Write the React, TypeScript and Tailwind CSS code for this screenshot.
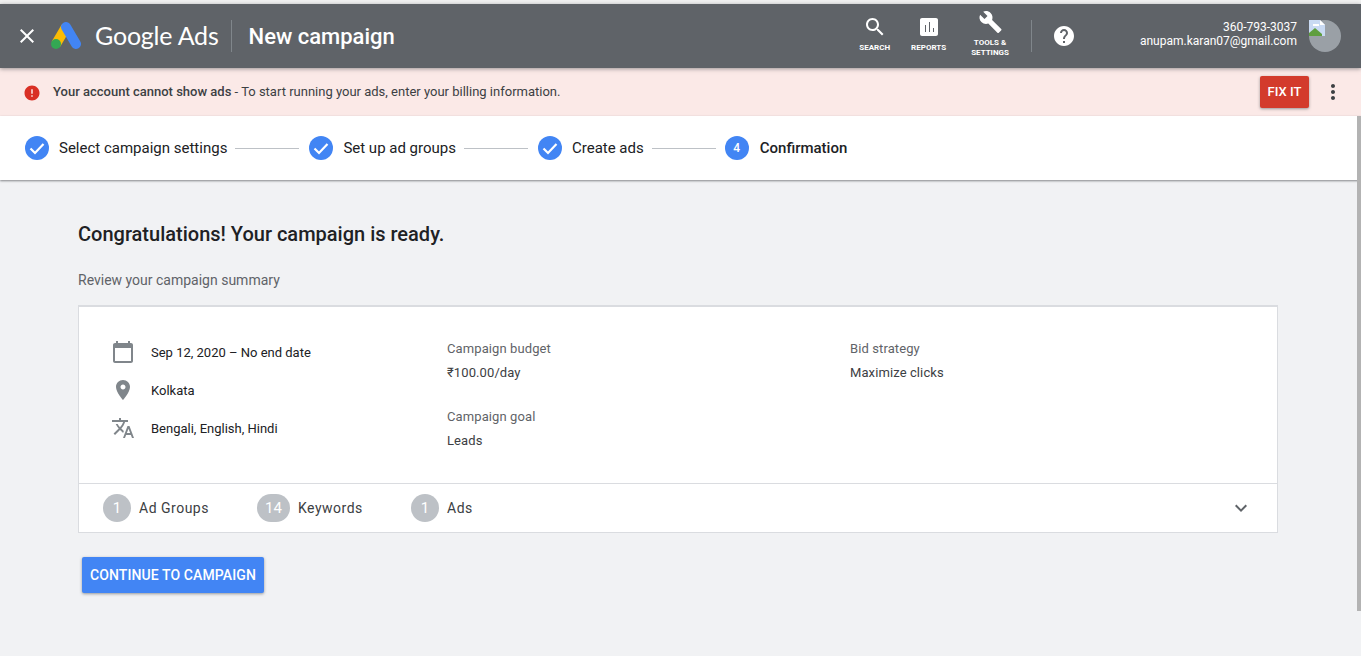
function Check({ className = '' }: { className?: string }) {
  return (
    <svg viewBox="0 0 24 24" className={`w-6 h-6 shrink-0 ${className}`}>
      <circle cx="12" cy="12" r="12" fill="#4285f4" />
      <path d="M5.5 12.5l4.5 4.5 8.5-9" fill="none" stroke="#fff" strokeWidth="2.2" />
    </svg>
  );
}

function Logo() {
  return (
    <svg viewBox="0 0 30 28" className="w-[30px] h-[28px]">
      <path d="M15 5L5 22" stroke="#fbbc04" strokeWidth="10" fill="none" />
      <path d="M15 5l10 17" stroke="#4285f4" strokeWidth="10" strokeLinecap="round" fill="none" />
      <circle cx="5" cy="22" r="5" fill="#34a853" />
    </svg>
  );
}

function NavIcon({ d, label, size = 'w-6 h-6' }: { d: string; label: React.ReactNode; size?: string }) {
  return (
    <div className="flex flex-col items-center mb-1 text-white font-bold text-[8px] leading-[10px] uppercase text-center">
      <svg viewBox="0 0 24 24" className={size} fill="#fff"><path d={d} /></svg>
      <span className="mt-1">{label}</span>
    </div>
  );
}

function Step({ label, line = true }: { label: string; line?: boolean }) {
  return (
    <>
      <Check />
      <span className="ml-[10px] text-[15px] text-[#202124] whitespace-nowrap">{label}</span>
      {line && <div className="h-px w-16 bg-[#bdc1c6] ml-2 mr-[10px]" />}
    </>
  );
}

function Count({ n, label, wide = false }: { n: number; label: string; wide?: boolean }) {
  return (
    <div className="flex items-center">
      <span className={`h-7 rounded-full bg-[#bdc1c6] text-white text-[15px] flex items-center justify-center ${wide ? 'w-[33px]' : 'w-7'}`}>{n}</span>
      <span className="ml-2 text-[14px] tracking-[0.5px] text-[#3c4043]">{label}</span>
    </div>
  );
}

export default function App() {
  return (
    <div className="h-[656px] overflow-hidden flex flex-col bg-[#f1f2f4] relative" style={{ fontFamily: 'Roboto, "Noto Sans", sans-serif' }}>
      <div className="h-1 bg-[#f1f1f1] shrink-0" />
      <header className="h-16 shrink-0 bg-[#5f6368] flex items-center shadow-[0_1px_4px_rgba(60,64,67,.5)] relative z-20">
        <svg viewBox="0 0 24 24" className="w-6 h-6 ml-[15px]" fill="#fff">
          <path d="M19 6.41L17.59 5 12 10.59 6.41 5 5 6.41 10.59 12 5 17.59 6.41 19 12 13.41 17.59 19 19 17.59 13.41 12z" />
        </svg>
        <div className="ml-[12px] flex"><Logo /></div>
        <span className="ml-[14px] text-[25px] tracking-[-0.2px] text-white" style={{ fontFamily: 'Lato, sans-serif' }}>Google Ads</span>
        <div className="w-px h-8 bg-[#80868b] ml-[12px]" />
        <span className="ml-[17px] text-[22px] font-medium text-white">New campaign</span>

        <div className="ml-auto flex items-center">
          <div className="mr-[21px]">
            <NavIcon label="Search" d="M15.5 14h-.79l-.28-.27C15.41 12.59 16 11.11 16 9.5 16 5.91 13.09 3 9.5 3S3 5.91 3 9.5 5.91 16 9.5 16c1.61 0 3.09-.59 4.23-1.57l.27.28v.79l5 4.99L20.49 19l-4.99-5zm-6 0C7.01 14 5 11.99 5 9.5S7.01 5 9.5 5 14 7.01 14 9.5 11.99 14 9.5 14z" />
          </div>
          <div className="mr-[25px]">
            <NavIcon label="Reports" d="M19 3H5c-1.1 0-2 .9-2 2v14c0 1.1.9 2 2 2h14c1.1 0 2-.9 2-2V5c0-1.1-.9-2-2-2zM9 17H8v-7h1v7zm4 0h-1V7h1v10zm4 0h-1v-4h1v4z" />
          </div>
          <div className="mr-[22px]">
            <NavIcon size="w-[25px] h-6" label={<>Tools &<br />Settings</>} d="M22.7 19l-9.1-9.1c.9-2.3.4-5-1.5-6.9-2-2-5-2.4-7.4-1.3L9 6 6 9 1.6 4.7C.4 7.1.9 10.1 2.9 12.1c1.9 1.9 4.6 2.4 6.9 1.5l9.1 9.1c.4.4 1 .4 1.4 0l2.3-2.3c.5-.4.5-1.1.1-1.4z" />
          </div>
          <div className="w-px h-8 bg-[#80868b]" />
          <svg viewBox="0 0 24 24" className="w-6 h-6 ml-5" fill="#fff">
            <path d="M12 2C6.48 2 2 6.48 2 12s4.48 10 10 10 10-4.48 10-10S17.52 2 12 2zm1 17h-2v-2h2v2zm2.07-7.75l-.9.92C13.45 12.9 13 13.5 13 15h-2v-.5c0-1.1.45-2.1 1.17-2.83l1.24-1.26c.37-.36.59-.86.59-1.41 0-1.1-.9-2-2-2s-2 .9-2 2H8c0-2.21 1.79-4 4-4s4 1.79 4 4c0 .88-.36 1.68-.93 2.25z" />
          </svg>
          <div className="ml-16 mb-1 text-right text-white text-[12px] leading-[14px]">
            <div>360-793-3037</div>
            <div>anupam.karan07@gmail.com</div>
          </div>
          <div className="relative w-8 h-8 rounded-full bg-[#9aa0a6] ml-3 mr-5">
            <svg viewBox="0 0 16 16" className="absolute left-0 top-0 w-4 h-4">
              <path d="M0 0h11l5 5v11H0z" fill="#c9daf3" />
              <path d="M11 0l5 5h-5z" fill="#fff" />
              <path d="M4 4h6v2H4z" fill="#fff" />
              <path d="M0 13l6-5 7 6v2H0z" fill="#5f9e3f" />
            </svg>
          </div>
        </div>
      </header>

      <div className="h-12 shrink-0 bg-[#fbe9e7] flex items-center relative">
        <svg viewBox="0 0 24 24" className="w-[18px] h-[18px] ml-[23px] mt-[2px]" fill="#d93025">
          <path d="M12 2C6.48 2 2 6.48 2 12s4.48 10 10 10 10-4.48 10-10S17.52 2 12 2zm1 15h-2v-2h2v2zm0-4h-2V7h2v6z" />
        </svg>
        <span className="ml-[12px] text-[13px] text-[#3c4043]">
          <span className="font-medium">Your account cannot show ads</span> - To start running your ads, enter your billing information.
        </span>
        <button className="ml-auto h-8 w-[49px] rounded-[2px] bg-[#d33b2c] text-white text-[13px] font-medium shadow-[0_1px_3px_rgba(60,64,67,.5)]">FIX IT</button>
        <svg viewBox="0 0 24 24" className="w-6 h-6 ml-3 mr-4" fill="#3c4043">
          <path d="M12 8c1.1 0 2-.9 2-2s-.9-2-2-2-2 .9-2 2 .9 2 2 2zm0 2c-1.1 0-2 .9-2 2s.9 2 2 2 2-.9 2-2-.9-2-2-2zm0 6c-1.1 0-2 .9-2 2s.9 2 2 2 2-.9 2-2-.9-2-2-2z" />
        </svg>
      </div>

      <div className="h-16 shrink-0 bg-white flex items-center pl-[25px] shadow-[0_1px_2px_rgba(60,64,67,.6)] relative z-10">
        <Step label="Select campaign settings" />
        <Step label="Set up ad groups" />
        <Step label="Create ads" />
        <span className="-ml-px w-6 h-6 rounded-full bg-[#4285f4] text-white text-[12px] font-medium flex items-center justify-center">4</span>
        <span className="ml-[11px] text-[15px] font-medium text-[#202124]">Confirmation</span>
      </div>

      <main className="flex-1 pl-[78px] pr-[83px]">
        <h1 className="mt-[41px] text-[20px] leading-[26px] font-medium text-[#202124]">Congratulations! Your campaign is ready.</h1>
        <p className="mt-[23px] text-[14px] leading-5 text-[#5f6368]">Review your campaign summary</p>
        <section className="mt-[15px] bg-white border border-[#dadce0] border-t-2">
          <div className="h-[176px] flex">
            <div className="w-[368px] pl-[32px] pt-[27px] shrink-0">
              {[
                ['Sep 12, 2020 – No end date', 'M20 3h-1V1h-2v2H7V1H5v2H4c-1.1 0-2 .9-2 2v16c0 1.1.9 2 2 2h16c1.1 0 2-.9 2-2V5c0-1.1-.9-2-2-2zm0 18H4V8h16v13z'],
                ['Kolkata', 'M12 2C8.13 2 5 5.13 5 9c0 5.25 7 13 7 13s7-7.75 7-13c0-3.87-3.13-7-7-7zm0 9.5c-1.38 0-2.5-1.12-2.5-2.5s1.12-2.5 2.5-2.5 2.5 1.12 2.5 2.5-1.12 2.5-2.5 2.5z'],
                ['Bengali, English, Hindi', 'M12.87 15.07l-2.54-2.51.03-.03c1.74-1.94 2.98-4.17 3.71-6.53H17V4h-7V2H8v2H1v1.99h11.17C11.5 7.92 10.44 9.75 9 11.35 8.07 10.32 7.3 9.19 6.69 8h-2c.73 1.63 1.73 3.17 2.98 4.56l-5.09 5.02L4 19l5-5 3.11 3.11.76-2.04zM18.5 10h-2L12 22h2l1.12-3h4.75L21 22h2l-4.5-12zm-2.62 7l1.62-4.33L19.12 17h-3.24z'],
              ].map(([t, d]) => (
                <div key={t} className="h-[38px] flex items-center">
                  <svg viewBox="0 0 24 24" className="w-6 h-6 mb-[2px]" fill="#80868b"><path d={d} /></svg>
                  <span className="ml-[16px] text-[13px] text-[#202124]">{t}</span>
                </div>
              ))}
            </div>
            <div className="w-[403px] pt-[32px] text-[13px] leading-[20px] tracking-[0.1px] shrink-0">
              <div className="text-[#5f6368]">Campaign budget</div>
              <div className="mt-1 text-[#3c4043]">₹100.00/day</div>
              <div className="mt-6 text-[#5f6368]">Campaign goal</div>
              <div className="mt-1 text-[#3c4043]">Leads</div>
            </div>
            <div className="pt-[32px] text-[13px] leading-[20px] tracking-[0.1px]">
              <div className="text-[#5f6368]">Bid strategy</div>
              <div className="mt-1 text-[#3c4043]">Maximize clicks</div>
            </div>
          </div>
          <div className="h-[49px] border-t border-[#dadce0] flex items-center pl-6 pr-6">
            <div className="w-[154px]"><Count n={1} label="Ad Groups" /></div>
            <div className="w-[154px]"><Count n={14} label="Keywords" wide /></div>
            <Count n={1} label="Ads" />
            <svg viewBox="0 0 24 24" className="w-6 h-6 ml-auto" fill="#5f6368">
              <path d="M16.59 8.59L12 13.17 7.41 8.59 6 10l6 6 6-6z" />
            </svg>
          </div>
        </section>
        <button className="mt-6 ml-1 h-9 w-[182px] rounded-[2px] bg-[#4285f4] text-white text-[14px] tracking-[0.1px] font-medium shadow-[0_1px_3px_rgba(60,64,67,.5)]">CONTINUE TO CAMPAIGN</button>
      </main>
      <div className="absolute right-0 top-[116px] w-1 h-[495px] bg-[#b3b3b3] z-20" />
    </div>
  );
}
